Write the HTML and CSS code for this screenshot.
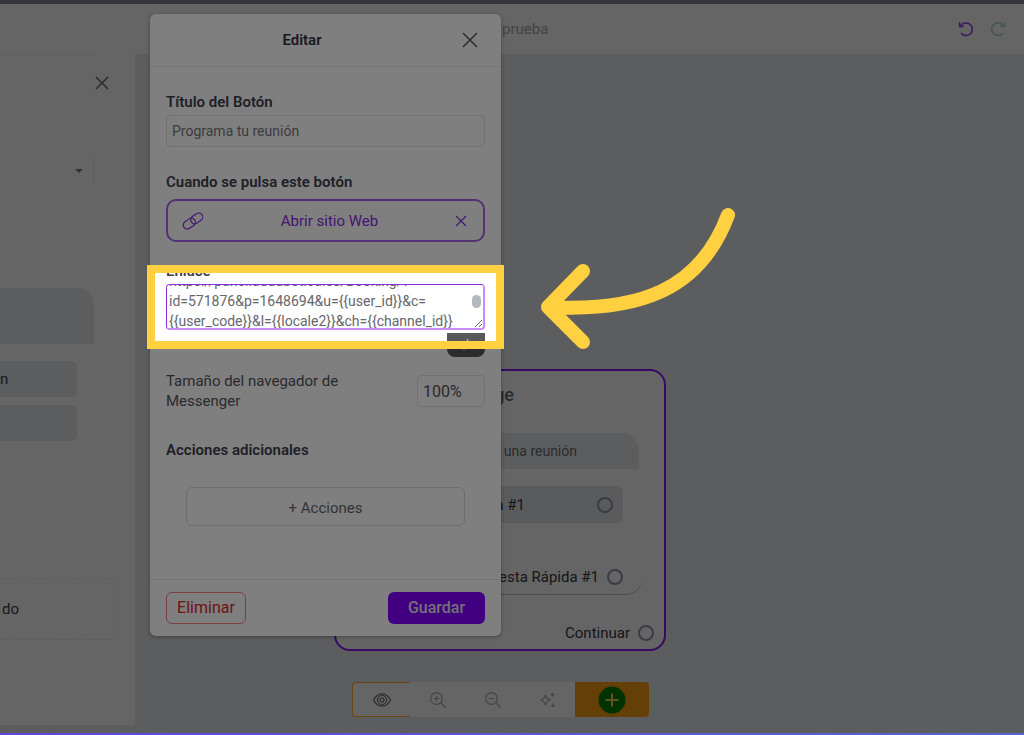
FILE: index.html
```html
<!DOCTYPE html>
<html lang="es">
<head>
  <meta charset="UTF-8">
  <title>Editar</title>
  <link rel="stylesheet" href="styles.css">
</head>
<body>
  <div class="app">
    <header class="topbar">
      <div class="flow-name">prueba</div>
      <button class="icon-btn undo" aria-label="Deshacer">
        <svg width="16" height="16" viewBox="0 0 16 16"><path d="M2.5 5.2A6.3 6.3 0 1 1 3 12M1.6 1.2V5.4H5.8"/></svg>
      </button>
      <button class="icon-btn redo" aria-label="Rehacer">
        <svg width="16" height="16" viewBox="0 0 16 16"><path d="M13.5 5.2A6.3 6.3 0 1 0 13 12M14.4 1.2V5.4H10.2"/></svg>
      </button>
    </header>

    <div class="main">
      <!-- Left panel -->
      <aside class="sidebar">
        <div class="sidebar-head">
          <button class="icon-btn" aria-label="Cerrar panel">
            <svg width="14" height="14" viewBox="0 0 14 14"><path d="M1 1L13 13M13 1L1 13"/></svg>
          </button>
        </div>
        <div class="sidebar-select"><span class="caret"></span></div>
        <div class="sidebar-bubble"></div>
        <div class="sidebar-item">n</div>
        <div class="sidebar-item"></div>
        <div class="sidebar-drop">do</div>
      </aside>

      <!-- Flow canvas -->
      <main class="canvas">
        <section class="node">
          <h2 class="node-title">Message</h2>
          <div class="node-bubble">Programa una reunión</div>
          <div class="node-button">Botón #1 <span class="port"></span></div>
          <div class="node-quick">Respuesta Rápida #1 <span class="port"></span></div>
          <div class="node-next">Continuar <span class="port"></span></div>
        </section>

        <div class="toolbar">
          <button class="tool tool-view" aria-label="Vista previa">
            <svg width="20" height="16" viewBox="0 0 20 16"><path d="M1.5 8C3.5 4 6.5 1.8 10 1.8S16.5 4 18.5 8C16.5 12 13.5 14.2 10 14.2S3.5 12 1.5 8Z"/><circle cx="10" cy="8" r="4.5"/><circle cx="10" cy="8" r="2"/></svg>
          </button>
          <button class="tool" aria-label="Acercar">
            <svg width="18" height="18" viewBox="0 0 18 18"><circle cx="7.5" cy="7.5" r="5.8"/><path d="M12 12L16.5 16.5M4.8 7.5H10.2M7.5 4.8V10.2"/></svg>
          </button>
          <button class="tool" aria-label="Alejar">
            <svg width="18" height="18" viewBox="0 0 18 18"><circle cx="7.5" cy="7.5" r="5.8"/><path d="M12 12L16.5 16.5M4.8 7.5H10.2"/></svg>
          </button>
          <button class="tool" aria-label="Ordenar">
            <svg width="18" height="18" viewBox="0 0 18 18"><path d="M6.5 4C7.200 7 8.500 8.300 11.500 9C8.500 9.700 7.200 11 6.500 14C5.800 11 4.500 9.700 1.500 9C4.500 8.300 5.800 7 6.500 4ZM13.500 1.500V6M11.200 3.700H15.800M14 12.500V16.500M12 14.500H16"/></svg>
          </button>
          <button class="tool tool-add" aria-label="Agregar">
            <svg width="28" height="28" viewBox="0 0 28 28"><circle cx="14" cy="14" r="13.5"/><path d="M14 7.5V20.5M7.5 14H20.5"/></svg>
          </button>
        </div>
      </main>
    </div>
  </div>

  <!-- Edit button dialog -->
  <form class="modal">
    <div class="modal-head">
      <h1 class="modal-title">Editar</h1>
      <button type="button" class="icon-btn modal-close" aria-label="Cerrar">
        <svg width="16" height="16" viewBox="0 0 16 16"><path d="M1 1L15 15M15 1L1 15"/></svg>
      </button>
    </div>

    <div class="modal-body">
      <label class="label" for="title">Título del Botón</label>
      <input class="input" id="title" type="text" value="Programa tu reunión">

      <h2 class="label label-action">Cuando se pulsa este botón</h2>
      <button type="button" class="action">
        <svg width="22" height="18" viewBox="0 0 22 18"><g transform="rotate(-35 11 9)"><rect x="0" y="5" width="13" height="8" rx="4"/><rect x="9" y="5" width="13" height="8" rx="4"/></g></svg>
        <span class="action-name">Abrir sitio Web</span>
        <svg width="12" height="12" viewBox="0 0 12 12"><path d="M1 1L11 11M11 1L1 11"/></svg>
      </button>

      <div class="link-field">
        <label class="label" for="link">Enlace</label>
        <textarea class="link-text" id="link" spellcheck="false">https://panel.audubotica.es/Booking/?
id=571876&amp;p=1648694&amp;u={{user_id}}&amp;c=
{{user_code}}&amp;l={{locale2}}&amp;ch={{channel_id}}</textarea>
        <span class="scroll-thumb"></span>
        <button type="button" class="code-btn">&lt;/&gt;</button>
        <div class="spotlight"></div>
        <svg class="pointer" width="196" height="142" viewBox="0 0 196 142"><path d="M188 7C160 82 100 104 8 99M43 63L8 99L43 134"/></svg>
      </div>

      <div class="size-row">
        <label for="size">Tamaño del navegador de Messenger</label>
        <input class="input size-input" id="size" type="text" value="100%">
      </div>

      <h2 class="label">Acciones adicionales</h2>
      <button type="button" class="add-action">+ Acciones</button>
    </div>

    <div class="modal-foot">
      <button type="button" class="btn btn-delete">Eliminar</button>
      <button type="submit" class="btn btn-save">Guardar</button>
    </div>
  </form>

  <script>
    document.getElementById('link').scrollTop = 16;
  </script>
</body>
</html>
```

FILE: styles.css
```css
* {
  box-sizing: border-box;
}

body {
  margin: 0;
  height: 100vh;
  overflow: hidden;
  font-family: Roboto, "Liberation Sans", sans-serif;
  font-size: 15px;
  line-height: 20px;
  color: #55555c;
}

h1,
h2 {
  margin: 0;
}

button,
input,
textarea {
  font: inherit;
  color: inherit;
}

button {
  background: none;
  border: 0;
  padding: 0;
  cursor: pointer;
}

svg {
  display: block;
  fill: none;
  stroke: currentColor;
  stroke-width: 1.5;
}

.app {
  display: flex;
  flex-direction: column;
  height: 100vh;
  background: #b8babd;
}

/* thin gradient line along the bottom */
.app::after {
  content: "";
  position: fixed;
  left: 0;
  right: 0;
  bottom: 0;
  height: 2px;
  background: linear-gradient(90deg, #6146dc, #5566c4);
  z-index: 20;
}

.topbar {
  display: flex;
  align-items: center;
  gap: 16px;
  height: 54px;
  padding: 0 18px 0 502px;
  border-top: 4px solid #6c6b78;
  background: #cacaca;
}

.flow-name {
  flex: 1;
  color: #88888c;
}

.icon-btn {
  color: #55555e;
}

.undo {
  color: #7a2fc0;
}

.redo {
  color: #8aa898;
}

.main {
  display: flex;
  flex: 1;
  min-height: 0;
}

/* Left panel */
.sidebar {
  flex: 0 0 135px;
  margin-bottom: 10px;
  background: #cacaca;
  color: #333338;
}

.sidebar-head {
  display: flex;
  align-items: center;
  justify-content: flex-end;
  height: 58px;
  padding-right: 26px;
}

.sidebar-head::before {
  content: "";
  align-self: flex-start;
  width: 94px;
  margin-right: auto;
  border-top: 1px solid #bcbcc0;
}

.sidebar-select {
  display: flex;
  align-items: center;
  justify-content: flex-end;
  width: 94px;
  height: 28px;
  margin-top: 45px;
  padding-right: 10px;
  border-right: 1px solid #bcbcc0;
}

.caret {
  border: 4px solid transparent;
  border-top-color: #66666c;
  border-bottom: 0;
}

.sidebar-bubble {
  width: 94px;
  height: 56px;
  margin: 103px 0 17px;
  border-radius: 0 16px 0 0;
  background: #b8babd;
}

.sidebar-item {
  width: 77px;
  height: 36px;
  margin-bottom: 8px;
  border-radius: 0 6px 6px 0;
  background: #b8babd;
  line-height: 36px;
}

.sidebar-drop {
  width: 115px;
  height: 62px;
  margin-top: 137px;
  padding-left: 2px;
  border: 1px dashed #b8bcc0;
  border-left: 0;
  border-radius: 0 6px 6px 0;
  line-height: 60px;
}

/* Flow canvas */
.canvas {
  position: relative;
  flex: 1;
}

.node {
  position: absolute;
  left: 199px;
  top: 315px;
  width: 332px;
  padding: 12px 10px 6px 14px;
  border: 2px solid #7212c8;
  border-radius: 16px;
  background: #cacaca;
  color: #2c2c32;
}

.node-title {
  padding-right: 140px;
  font-size: 18px;
  font-weight: 500;
  line-height: 24px;
  text-align: right;
  color: #55555c;
}

.node-bubble {
  margin: 26px 15px 17px 0;
  padding: 8px 62px 8px 0;
  border-radius: 18px 18px 0 0;
  background: #b8babd;
  font-size: 14px;
  text-align: right;
  color: #55555c;
}

.node-button,
.node-quick,
.node-next {
  display: flex;
  align-items: center;
  justify-content: flex-end;
}

.node-button {
  gap: 72px;
  height: 37px;
  margin-right: 31px;
  padding-right: 10px;
  border-radius: 6px;
  background: #b4b6ba;
}

.node-quick {
  gap: 8px;
  height: 36px;
  margin: 36px 11px 28px 0;
  padding-right: 20px;
  border-bottom: 1px solid #99999c;
  border-radius: 0 0 18px 18px;
}

.node-next {
  gap: 8px;
}

.port {
  width: 16px;
  height: 16px;
  border: 2px solid #77778a;
  border-radius: 50%;
}

.toolbar {
  position: absolute;
  left: 217px;
  bottom: 18px;
  display: flex;
  height: 35px;
  border-radius: 4px;
  background: #cacaca;
}

.tool {
  display: flex;
  align-items: center;
  justify-content: center;
  width: 55px;
  color: #88888c;
}

.tool svg {
  stroke-width: 1.2;
}

.tool-view {
  width: 58px;
  border: 1px solid #d08a20;
  border-right: 0;
  border-radius: 4px 0 0 4px;
  color: #55555c;
}

.tool-add {
  width: 74px;
  border-radius: 0 4px 4px 0;
  background: #c88010;
  color: #c8a040;
}

.tool-add svg {
  stroke-width: 2;
}

.tool-add circle {
  fill: #006400;
  stroke: none;
}

/* Dialog */
.modal {
  position: absolute;
  left: 150px;
  top: 14px;
  z-index: 10;
  width: 351px;
  border-radius: 6px;
  background: #fff;
  box-shadow: 0 1px 4px rgba(0, 0, 0, 0.3);
}

.modal-head {
  display: flex;
  align-items: center;
  height: 53px;
  padding-right: 16px;
  border-bottom: 1px solid #ececf0;
}

.modal-title {
  flex: 1;
  font-size: 15px;
  font-weight: 600;
  text-align: center;
  color: #33334a;
}

.modal-close {
  display: flex;
  justify-content: center;
  width: 31px;
}

.modal-body {
  display: flex;
  flex-direction: column;
  padding: 25px 16px 53px;
}

.label {
  display: block;
  margin-bottom: 3px;
  font-size: 15px;
  font-weight: 600;
  color: #40404c;
}

.input {
  width: 100%;
  height: 32px;
  padding: 0 5px;
  border: 1px solid #e4e4e8;
  border-radius: 4px;
  background: #fff;
  font-size: 14px;
  color: #77777c;
}

.label-action {
  margin: 25px 0 7px;
}

.action {
  display: flex;
  align-items: center;
  height: 43px;
  padding: 0 16px 0 14px;
  border: 2px solid #a860e8;
  border-radius: 10px;
  color: #8a2be2;
}

.action svg {
  stroke-width: 1.2;
}

.action-name {
  flex: 1;
}

.link-field {
  position: relative;
  display: flex;
  flex-direction: column;
  margin-top: 19px;
}

.link-text {
  height: 46px;
  padding: 2px;
  border: 1px solid #8a2be2;
  border-right: 2px solid #c88afc;
  border-bottom: 2px solid #c88afc;
  border-radius: 4px;
  outline: 0;
  resize: vertical;
  font-size: 14px;
  color: #66666c;
}

.link-text::-webkit-scrollbar {
  width: 0;
}

.scroll-thumb {
  position: absolute;
  right: 4px;
  top: 34px;
  width: 9px;
  height: 13px;
  border-radius: 5px;
  background: #b4b8c0;
}

.code-btn {
  align-self: flex-end;
  width: 38px;
  height: 24px;
  margin-top: 3px;
  border-radius: 0 0 8px 8px;
  background: #58585c;
  font-size: 14px;
  color: #c8c8cc;
}

/* dims everything outside the frame */
.spotlight {
  position: absolute;
  left: -19px;
  right: -19px;
  top: 4px;
  height: 84px;
  border: 8px solid #ffd040;
  box-shadow: 0 0 0 200vmax rgba(0, 0, 0, 0.5);
  pointer-events: none;
}

.pointer {
  position: absolute;
  left: calc(100% + 55px);
  top: -53px;
  stroke: #ffd040;
  stroke-width: 14;
  stroke-linecap: round;
  stroke-linejoin: round;
  pointer-events: none;
}

.size-row {
  display: flex;
  align-items: center;
  justify-content: space-between;
  margin: 14px 0 29px;
}

.size-row label {
  width: 200px;
}

.size-input {
  width: 68px;
  font-size: 16px;
  color: #55555c;
}

.add-action {
  height: 39px;
  margin: 24px 20px 0;
  padding-top: 2px;
  border: 1px solid #dcdce0;
  border-radius: 6px;
  color: #66666c;
}

.modal-foot {
  display: flex;
  justify-content: space-between;
  padding: 12px 16px;
  border-top: 1px solid #ececf0;
}

.btn {
  height: 32px;
  border-radius: 6px;
  font-size: 16px;
}

.btn-delete {
  width: 80px;
  border: 1px solid #f08080;
  color: #e02828;
}

.btn-save {
  width: 97px;
  background: #8000ff;
  font-weight: 500;
  color: #e8e0f0;
}
```
